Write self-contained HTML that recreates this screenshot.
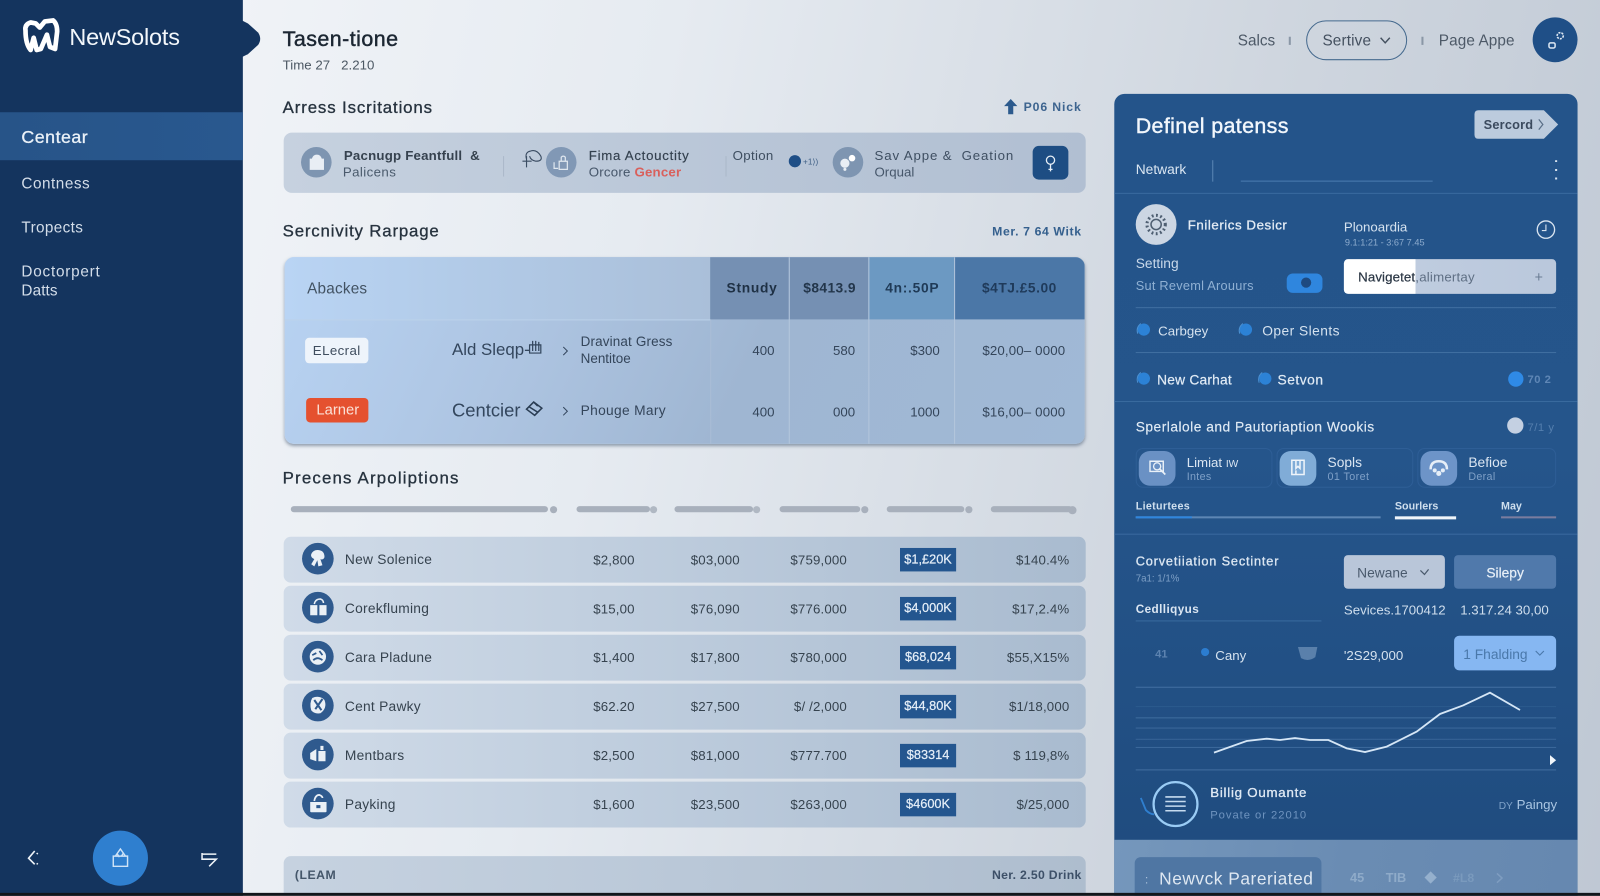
<!DOCTYPE html>
<html><head><meta charset="utf-8"><title>NewSolots</title>
<style>
html,body{margin:0;padding:0;width:1600px;height:896px;overflow:hidden;background:#111;font-family:"Liberation Sans",sans-serif}
#w{position:absolute;left:0;top:0;width:1568px;height:878px;transform:scale(1.020408);transform-origin:0 0;overflow:hidden;background:linear-gradient(102deg,#f5f7fa 0%,#e6ebf1 38%,#cfd6df 72%,#bfc8d4 100%)}
.b{position:absolute;box-sizing:border-box}
.t{position:absolute;white-space:nowrap;line-height:1.2;transform:translateY(calc(-50% + .8px))}
.r{transform:translate(-100%,calc(-50% + .8px))}
.c{transform:translate(-50%,calc(-50% + .8px))}
.m{-webkit-text-stroke:.3px currentColor}
.f{font-weight:700}
svg{position:absolute;overflow:visible}
.row{position:absolute;left:278px;width:786px;height:45px;border-radius:7px;background:linear-gradient(90deg,#d0dbe8,#bccbdc 50%,#a9bbcf)}
.circ{position:absolute;left:296px;width:31px;height:31px;border-radius:50%;background:#2f5a8e}
.n{font-size:13.5px;color:#36434f;left:338px;letter-spacing:.25px}
.v{font-size:13px;color:#36434f;letter-spacing:.15px}
.pill{position:absolute;left:882px;width:55px;height:23px;background:#24568f;color:#e6eff8;font-size:12.5px;line-height:23px;text-align:center;-webkit-text-stroke:.2px #e6eff8}
.ln{position:absolute;height:1px;background:#3a6a9f}
.gl{position:absolute;left:1113px;width:412px;height:1px;background:#4d7aab}
.tb{font-size:13.5px;color:#34455a}
</style></head><body>
<div id="w">
<!-- sidebar -->
<div class="b" style="left:0;top:0;width:238px;height:878px;background:#14345e"></div>
<svg style="left:237px;top:20px" width="21" height="37"><path d="M0 0 L6 3 L16 12 Q20 18 16 24 L6 33 L0 36Z" fill="#14345e"/></svg>
<div class="b" style="left:0;top:110px;width:238px;height:47px;background:linear-gradient(90deg,#275488,#29588f)"></div>
<svg style="left:21px;top:17px" width="38" height="36" viewBox="0 0 38 36"><path d="M4 13 Q3 7 9 5 L14 6 L18 10 L23 4 L31 3 Q35 6 35 14 L33 31 L28 29 L25 17 L19 31 L15 32 L12 20 L9 32 Q4 26 4 13Z" fill="none" stroke="#fff" stroke-width="4.6" stroke-linejoin="round"/></svg>
<div class="t" style="left:68px;top:36px;font-size:23px;color:#f3f7fb;letter-spacing:-.2px">NewSolots</div>
<div class="t m" style="left:21px;top:134px;font-size:17.5px;color:#eaf1f8;letter-spacing:.45px">Centear</div>
<div class="t" style="left:21px;top:180px;font-size:15px;color:#d3dde9;letter-spacing:.5px">Contness</div>
<div class="t" style="left:21px;top:223px;font-size:15px;color:#d3dde9;letter-spacing:.35px">Tropects</div>
<div class="t" style="left:21px;top:265.500px;font-size:15px;color:#d3dde9;letter-spacing:.75px">Doctorpert</div>
<div class="t" style="left:21px;top:284.500px;font-size:15px;color:#d3dde9;letter-spacing:.1px">Datts</div>
<svg style="left:26px;top:833px" width="14" height="16" viewBox="0 0 14 16"><path d="M8 1 L2 8 L8 14 M10 4 L11 3 M10 13 L11 14" stroke="#eef3f8" stroke-width="1.6" fill="none"/></svg>
<div class="b" style="left:91px;top:814px;width:54px;height:54px;border-radius:50%;background:#2f7fcf"></div>
<svg style="left:109px;top:831px" width="18" height="19" viewBox="0 0 18 19"><path d="M2 8 H16 V18 H2Z M4 8 L9 1 L14 8 M6 6 L8 9 M12 5 L10 8" stroke="#cfe3f7" stroke-width="1.4" fill="none"/></svg>
<svg style="left:197px;top:834px" width="16" height="16" viewBox="0 0 16 16"><path d="M1 2 V8 H15 L8 15 M1 3 H15" stroke="#eef3f8" stroke-width="1.5" fill="none"/></svg>

<!-- head -->
<div class="t m" style="left:277px;top:38px;font-size:21px;color:#1c2733;letter-spacing:.45px;-webkit-text-stroke:.45px #1c2733">Tasen-tione</div>
<div class="t" style="left:277px;top:63px;font-size:13px;color:#4b5763;white-space:pre">Time 27   2.210</div>
<div class="t" style="left:1213px;top:40px;font-size:15px;color:#4d5967">Salcs</div>
<div class="b" style="left:1263px;top:36px;width:1.5px;height:8px;background:#8a97a6"></div>
<div class="b" style="left:1280px;top:20px;width:99px;height:39px;border-radius:20px;border:1.5px solid #466a8e"></div>
<div class="t" style="left:1296px;top:40px;font-size:15px;color:#44505f;letter-spacing:.15px">Sertive</div>
<svg style="left:1352px;top:36px" width="11" height="8"><path d="M1 1 L5.500 6 L10 1" stroke="#44505f" stroke-width="1.400" fill="none"/></svg>
<div class="b" style="left:1393px;top:36px;width:1.5px;height:8px;background:#8a97a6"></div>
<div class="t" style="left:1410px;top:40px;font-size:15px;color:#4d5967;letter-spacing:.1px">Page Appe</div>
<div class="b" style="left:1502px;top:17px;width:44px;height:44px;border-radius:50%;background:#1f4f87"></div>
<svg style="left:1514px;top:29px" width="22" height="20"><circle cx="15" cy="6" r="3" fill="none" stroke="#dbe6f2" stroke-width="1.600" stroke-dasharray="2 1"/><rect x="4" y="13" width="6" height="5" rx="1.500" fill="none" stroke="#dbe6f2" stroke-width="1.500"/></svg>

<!-- section 1 -->
<div class="t m" style="left:277px;top:106px;font-size:16.500px;color:#27333f;letter-spacing:.85px">Arress Iscritations</div>
<svg style="left:984px;top:97px" width="13" height="16"><path d="M6.500 0 L13 7 H9 V15 H4 V7 H0Z" fill="#2c5a8d"/></svg>
<div class="t f r" style="left:1060px;top:104px;font-size:12px;color:#3d648f;letter-spacing:.85px">P06 Nick</div>
<div class="b" style="left:278px;top:130px;width:786px;height:59px;border-radius:8px;background:linear-gradient(90deg,#c6d1df,#bac7d8 50%,#b1bfd2)"></div>
<div class="b" style="left:295px;top:144px;width:30px;height:30px;border-radius:50%;background:#7e95b1"></div>
<svg style="left:303px;top:151px" width="15" height="16"><path d="M1 5 H14 V15 H1Z M3 5 Q4 1 7.500 1 Q11 1 12 5" fill="#e9eef4" stroke="#e9eef4"/></svg>
<div class="t f" style="left:337px;top:152px;font-size:13px;color:#36424f;letter-spacing:.2px;white-space:pre">Pacnugp Feantfull  &amp;</div>
<div class="t" style="left:336px;top:168px;font-size:13px;color:#4a5a6c;letter-spacing:.4px">Palicens</div>
<div class="b" style="left:493px;top:153px;width:1px;height:20px;background:#aab8c9"></div>
<svg style="left:511px;top:146px" width="21" height="19" viewBox="0 0 21 19"><path d="M1 12 H10 M5 7 V18 M5 10 Q3 3 9 2 Q15 0 19 7 Q21 12 14 12 Q9 11 8 7" fill="none" stroke="#3a4c62" stroke-width="1.100"/></svg>
<div class="b" style="left:535px;top:144px;width:30px;height:30px;border-radius:50%;background:#8198b5"></div>
<svg style="left:542px;top:151px" width="16" height="16"><path d="M1 8 V14 H5 M6 7 H14 V15 H6Z M8 7 V3 Q10 1 12 3 V7" fill="none" stroke="#dfe7ef" stroke-width="1.200"/></svg>
<div class="t m" style="left:577px;top:152px;font-size:13px;color:#34414f;letter-spacing:.7px;-webkit-text-stroke:.15px #34414f">Fima Actouctity</div>
<div class="t" style="left:577px;top:168px;font-size:13px;color:#46566a;letter-spacing:.2px">Orcore <span style="color:#d9605c" class="f">Gencer</span></div>
<div class="b" style="left:711px;top:153px;width:1px;height:20px;background:#aab8c9"></div>
<div class="t" style="left:718px;top:152px;font-size:13px;color:#3e4e60;letter-spacing:.3px">Option</div>
<div class="b" style="left:773px;top:152px;width:12px;height:12px;border-radius:50%;background:#1f4f87"></div>
<div class="t" style="left:787px;top:158px;font-size:8px;color:#3f5f85">+1&#x27E9;)</div>
<div class="b" style="left:816px;top:144px;width:30px;height:30px;border-radius:50%;background:#7e95b1"></div>
<svg style="left:821px;top:150px" width="20" height="19"><circle cx="7" cy="10" r="4.500" fill="#e9eef4"/><circle cx="14" cy="5" r="3.200" fill="#fff"/><circle cx="7" cy="16" r="1.500" fill="#e9eef4"/></svg>
<div class="t" style="left:857px;top:152px;font-size:13px;color:#3f4f62;white-space:pre;letter-spacing:.85px">Sav Appe &amp;  Geation</div>
<div class="t" style="left:857px;top:168px;font-size:13px;color:#46566a">Orqual</div>
<div class="b" style="left:1012px;top:143px;width:35px;height:33px;border-radius:6px;background:#1d4d83"></div>
<svg style="left:1024px;top:152px" width="11" height="17"><circle cx="5.500" cy="5" r="4" fill="none" stroke="#e6eef6" stroke-width="1.300"/><path d="M5.500 9 V16 M3.500 14 H7.500" stroke="#e6eef6" stroke-width="1.300"/></svg>

<!-- section 2 -->
<div class="t m" style="left:277px;top:227px;font-size:16.500px;color:#27333f;letter-spacing:.8px">Sercnivity Rarpage</div>
<div class="t f r" style="left:1060px;top:226px;font-size:12px;color:#35608e;letter-spacing:.6px">Mer. 7 64 Witk</div>
<div class="b" style="left:279px;top:252px;width:784px;height:183px;border-radius:9px;overflow:hidden;box-shadow:0 2px 3px rgba(70,90,115,.55);background:linear-gradient(115deg,#b8d3f3 0%,#adc4e1 32%,#9fb6d2 58%,#a0b9d6 100%)">
 <div class="b" style="left:0;top:0;width:417px;height:61px;background:linear-gradient(90deg,#b9d4f4,#b2cbe8 40%,#aabfd9)"></div>
 <div class="b" style="left:417px;top:0;width:77px;height:61px;background:#7590b3"></div>
 <div class="b" style="left:494px;top:0;width:78px;height:61px;background:#7590b3"></div>
 <div class="b" style="left:572px;top:0;width:84px;height:61px;background:#6c99c2"></div>
 <div class="b" style="left:656px;top:0;width:128px;height:61px;background:#4b77a7"></div>
 <div class="b" style="left:494px;top:0;width:1px;height:183px;background:#b3c6dc"></div>
 <div class="b" style="left:572px;top:0;width:1px;height:183px;background:#b3c6dc"></div>
 <div class="b" style="left:656px;top:0;width:1px;height:183px;background:#b3c6dc"></div>
 <div class="b" style="left:417px;top:61px;width:1px;height:122px;background:#a9bdd6"></div>
 <div class="b" style="left:0;top:61px;width:417px;height:1px;background:#bcd2ea"></div>
</div>
<div class="t" style="left:301px;top:283px;font-size:15px;color:#425262;letter-spacing:.2px">Abackes</div>
<div class="t f c" style="left:737px;top:282px;font-size:13.500px;color:#1e3044;letter-spacing:.7px">Stnudy</div>
<div class="t f c" style="left:813px;top:282px;font-size:13.500px;color:#23364b;letter-spacing:.4px">$8413.9</div>
<div class="t f c" style="left:894px;top:282px;font-size:13.500px;color:#1f3a56;letter-spacing:.7px">4n:.50P</div>
<div class="t f c" style="left:999px;top:282px;font-size:13.500px;color:#1f3a5a;letter-spacing:.5px">$4TJ.£5.00</div>
<div class="b" style="left:299px;top:331px;width:62px;height:25px;border-radius:4px;background:#eef4fb"></div>
<div class="t c" style="left:330px;top:343px;font-size:13px;color:#3f4d5e;letter-spacing:.4px">ELecral</div>
<div class="b" style="left:300px;top:390px;width:61px;height:24px;border-radius:4px;background:#e5512f"></div>
<div class="t c" style="left:331px;top:402px;font-size:14.500px;color:#fbe0d5">Larner</div>
<div class="t" style="left:443px;top:342.500px;font-size:16.500px;color:#33465d">Ald Sleqp-</div>
<svg style="left:516px;top:332px" width="17" height="17" viewBox="0 0 17 17"><path d="M3 6 H14 V14 H3Z M6 2 V12 M9 2 V12 M12 3 V12" fill="none" stroke="#33465d" stroke-width="1.200"/></svg>
<div class="t" style="left:443px;top:402px;font-size:18px;color:#33465d">Centcier</div>
<svg style="left:514px;top:392px" width="19" height="18" viewBox="0 0 19 18"><path d="M9 2 L17 8 L10 15 L2 9Z M5 7 L13 12 M9 2 L13 6" fill="none" stroke="#2a3d53" stroke-width="1.500"/></svg>
<svg style="left:551px;top:339px" width="7" height="10"><path d="M1 1 L5 5 L1 9" stroke="#33465d" fill="none"/></svg>
<svg style="left:551px;top:398px" width="7" height="10"><path d="M1 1 L5 5 L1 9" stroke="#33465d" fill="none"/></svg>
<div class="t tb" style="left:569px;top:334px;font-size:13.200px;letter-spacing:.15px">Dravinat Gress</div>
<div class="t tb" style="left:569px;top:351px;font-size:13.200px">Nentitoe</div>
<div class="t tb" style="left:569px;top:402px;letter-spacing:.3px">Phouge Mary</div>
<div class="t tb r" style="left:759px;top:343px;font-size:13px">400</div>
<div class="t tb r" style="left:838px;top:343px;font-size:13px">580</div>
<div class="t tb r" style="left:921px;top:343px;font-size:13px">$300</div>
<div class="t tb r" style="left:1044px;top:343px;font-size:13px;letter-spacing:.15px">$20,00– 0000</div>
<div class="t tb r" style="left:759px;top:403px;font-size:13px">400</div>
<div class="t tb r" style="left:838px;top:403px;font-size:13px">000</div>
<div class="t tb r" style="left:921px;top:403px;font-size:13px">1000</div>
<div class="t tb r" style="left:1044px;top:403px;font-size:13px;letter-spacing:.15px">$16,00– 0000</div>

<!-- section 3 -->
<div class="t m" style="left:277px;top:469px;font-size:16.500px;color:#27333f;letter-spacing:1.15px">Precens Arpoliptions</div>
<div class="b" style="left:285px;top:496px;width:252px;height:6px;border-radius:3px;background:#a8b0bc"></div><div class="b" style="left:539px;top:496px;width:7px;height:7px;border-radius:50%;background:#a8b0bc"></div>
<div class="b" style="left:565px;top:496px;width:72px;height:6px;border-radius:3px;background:#a8b0bc"></div><div class="b" style="left:637px;top:496px;width:7px;height:7px;border-radius:50%;background:#b0b8c3"></div>
<div class="b" style="left:661px;top:496px;width:77px;height:6px;border-radius:3px;background:#a8b0bc"></div><div class="b" style="left:738px;top:496px;width:7px;height:7px;border-radius:50%;background:#b0b8c3"></div>
<div class="b" style="left:764px;top:496px;width:79px;height:6px;border-radius:3px;background:#a8b0bc"></div><div class="b" style="left:844px;top:496px;width:7px;height:7px;border-radius:50%;background:#a8b0bc"></div>
<div class="b" style="left:869px;top:496px;width:76px;height:6px;border-radius:3px;background:#a8b0bc"></div><div class="b" style="left:946px;top:496px;width:7px;height:7px;border-radius:50%;background:#a8b0bc"></div>
<div class="b" style="left:971px;top:496px;width:80px;height:6px;border-radius:3px;background:#a8b0bc"></div><div class="b" style="left:1047px;top:496px;width:8px;height:8px;border-radius:50%;background:#a8b0bc"></div>

<div class="row" style="top:526px"></div>
<div class="row" style="top:574px"></div>
<div class="row" style="top:622px"></div>
<div class="row" style="top:670px"></div>
<div class="row" style="top:718px"></div>
<div class="row" style="top:766px"></div>
<div class="circ" style="top:532px"></div><div class="circ" style="top:580px"></div><div class="circ" style="top:628px"></div><div class="circ" style="top:676px"></div><div class="circ" style="top:724px"></div><div class="circ" style="top:772px"></div>
<svg style="left:302px;top:538px" width="19" height="19" viewBox="0 0 19 19"><path d="M9 1 Q16 1 16 8 Q15 11 12 10 L14 16 L10 17 L9 11 L6 17 L3 15 L6 10 Q2 8 3 5 Q5 1 9 1Z" fill="#eaf0f6"/></svg>
<svg style="left:303px;top:586px" width="18" height="19" viewBox="0 0 18 19"><path d="M1 7 H8 V17 H1Z M10 7 H17 V17 H10Z" fill="#eaf0f6"/><path d="M5 6 Q6 1 11 1 Q14 2 14 5" fill="none" stroke="#eaf0f6" stroke-width="1.500"/></svg>
<svg style="left:302px;top:634px" width="19" height="19" viewBox="0 0 19 19"><circle cx="9.500" cy="9.500" r="8" fill="#eaf0f6"/><path d="M4 8 L8 6 M5 13 Q9 9 14 13 M11 4 L14 8" stroke="#2f5a8e" stroke-width="1.700" fill="none"/></svg>
<svg style="left:302px;top:682px" width="19" height="19" viewBox="0 0 19 19"><path d="M4 2 Q11 -1 16 4 Q19 12 12 17 Q6 18 3 14 Q1 7 4 2Z" fill="#eaf0f6"/><path d="M6 4 L13 14 M14 3 L7 13" stroke="#2f5a8e" stroke-width="2" fill="none"/></svg>
<svg style="left:303px;top:730px" width="18" height="19" viewBox="0 0 18 19"><path d="M1 8 L7 4 V16 L1 14Z M9 6 H16 V16 H9Z M11 5 V1 H14 V5" fill="#eaf0f6"/></svg>
<svg style="left:303px;top:778px" width="18" height="19" viewBox="0 0 18 19"><path d="M1 8 H17 V17 Q17 18 16 18 H2 Q1 18 1 17Z" fill="#eaf0f6"/><path d="M5 7 Q6 1 10 1 Q13 2 13 4" fill="none" stroke="#eaf0f6" stroke-width="1.700"/><rect x="7" y="11" width="4" height="3" fill="#2f5a8e"/></svg>

<div class="t n" style="top:547.500px">New Solenice</div>
<div class="t n" style="top:595.500px">Corekfluming</div>
<div class="t n" style="top:643.500px">Cara Pladune</div>
<div class="t n" style="top:691.500px">Cent Pawky</div>
<div class="t n" style="top:739.500px">Mentbars</div>
<div class="t n" style="top:787.500px">Payking</div>

<div class="t v r" style="left:622px;top:547.500px">$2,800</div><div class="t v r" style="left:725px;top:547.500px">$03,000</div><div class="t v r" style="left:830px;top:547.500px">$759,000</div><div class="pill" style="top:537px">$1,£20K</div><div class="t v r" style="left:1048px;top:547.500px">$140.4%</div>
<div class="t v r" style="left:622px;top:595.500px">$15,00</div><div class="t v r" style="left:725px;top:595.500px">$76,090</div><div class="t v r" style="left:830px;top:595.500px">$776.000</div><div class="pill" style="top:585px">$4,000K</div><div class="t v r" style="left:1048px;top:595.500px">$17,2.4%</div>
<div class="t v r" style="left:622px;top:643.500px">$1,400</div><div class="t v r" style="left:725px;top:643.500px">$17,800</div><div class="t v r" style="left:830px;top:643.500px">$780,000</div><div class="pill" style="top:633px">$68,024</div><div class="t v r" style="left:1048px;top:643.500px">$55,X15%</div>
<div class="t v r" style="left:622px;top:691.500px">$62.20</div><div class="t v r" style="left:725px;top:691.500px">$27,500</div><div class="t v r" style="left:830px;top:691.500px">$/ /2,000</div><div class="pill" style="top:681px">$44,80K</div><div class="t v r" style="left:1048px;top:691.500px">$1/18,000</div>
<div class="t v r" style="left:622px;top:739.500px">$2,500</div><div class="t v r" style="left:725px;top:739.500px">$81,000</div><div class="t v r" style="left:830px;top:739.500px">$777.700</div><div class="pill" style="top:729px">$83314</div><div class="t v r" style="left:1048px;top:739.500px">$ 119,8%</div>
<div class="t v r" style="left:622px;top:787.500px">$1,600</div><div class="t v r" style="left:725px;top:787.500px">$23,500</div><div class="t v r" style="left:830px;top:787.500px">$263,000</div><div class="pill" style="top:777px">$4600K</div><div class="t v r" style="left:1048px;top:787.500px">$/25,000</div>

<div class="b" style="left:278px;top:839px;width:786px;height:40px;border-radius:7px 7px 0 0;background:linear-gradient(90deg,#c6d2e0,#bac8d8 50%,#aebdce)"></div>
<div class="t f" style="left:289px;top:857px;font-size:12px;color:#44566a;letter-spacing:.5px">(LEAM</div>
<div class="t f r" style="left:1060px;top:857px;font-size:12px;color:#3d5068;letter-spacing:.3px">Ner. 2.50 Drink</div>

<!-- right panel -->
<div class="b" style="left:1092px;top:92px;width:454px;height:790px;border-radius:10px 10px 0 0;background:linear-gradient(180deg,#24548a 0%,#25558b 45%,#1f4b7e 100%)"></div>
<div class="b" style="left:1092px;top:823px;width:454px;height:60px;background:linear-gradient(100deg,#7597bc,#6a8cb3 50%,#6688b0)"></div>
<div class="b" style="left:1112px;top:840px;width:183px;height:40px;border-radius:6px 6px 0 0;background:#4f76a3"></div>
<div class="t" style="left:1136px;top:861px;font-size:17px;color:#dfe8f2;letter-spacing:.5px">Newvck Pareriated</div>
<div class="t" style="left:1122px;top:861px;font-size:12px;color:#a9c0d9">:</div>
<div class="t f" style="left:1323px;top:860px;font-size:12.500px;color:#8fabc9">45</div>
<div class="t f" style="left:1358px;top:860px;font-size:12.500px;color:#8fabc9">TIB</div>
<svg style="left:1396px;top:854px" width="12" height="12"><path d="M6 0 L12 6 L6 12 L0 6Z" fill="#95b0cd"/></svg>
<div class="t f" style="left:1424px;top:860px;font-size:12px;color:#7a9abd">#L8</div>
<svg style="left:1466px;top:855px" width="8" height="11"><path d="M1 1 L6 5.500 L1 10" stroke="#7f9dc0" stroke-width="1.500" fill="none"/></svg>

<div class="t m" style="left:1113px;top:123px;font-size:21px;color:#f2f7fc;letter-spacing:.35px;-webkit-text-stroke:.4px #f2f7fc">Definel patenss</div>
<svg style="left:1445px;top:108px" width="83" height="28"><path d="M4 0 H68 L82 14 L68 28 H4 Q0 28 0 24 V4 Q0 0 4 0Z" fill="#bccbdd"/><path d="M63 9 L67 14 L63 19" stroke="#5a6f88" stroke-width="1.200" fill="none"/></svg>
<div class="t f" style="left:1454px;top:122px;font-size:12.500px;color:#3b4a5e;letter-spacing:.2px">Sercord</div>
<div class="t" style="left:1113px;top:166px;font-size:13.500px;color:#dae6f2">Netwark</div>
<div class="b" style="left:1188px;top:157px;width:1px;height:21px;background:#5b86b5"></div>
<div class="b" style="left:1216px;top:177px;width:188px;height:1px;background:#4b7cb0"></div>
<div class="b" style="left:1524px;top:157px;width:2px;height:21px;background:repeating-linear-gradient(180deg,#d8e3ef 0 2px,transparent 2px 8.500px)"></div>
<div class="ln" style="left:1092px;top:189px;width:454px"></div>
<div class="b" style="left:1113px;top:200px;width:40px;height:40px;border-radius:50%;background:#ccd6e3"></div>
<svg style="left:1122px;top:209px" width="22" height="22" viewBox="0 0 22 22"><circle cx="11" cy="11" r="5" fill="none" stroke="#4f5f72" stroke-width="1.500"/><circle cx="11" cy="11" r="9" fill="none" stroke="#4f5f72" stroke-width="3" stroke-dasharray="1.800 2.400"/></svg>
<div class="t m" style="left:1164px;top:220px;font-size:13px;color:#e4ecf5;letter-spacing:.55px">Fnilerics Desicr</div>
<div class="t" style="left:1317px;top:222px;font-size:13px;color:#d5e2ef">Plonoardia</div>
<div class="t" style="left:1318px;top:237px;font-size:9px;color:#8eacce">9.1:1:21 - 3:67 7.45</div>
<svg style="left:1505px;top:215px" width="20" height="20"><circle cx="10" cy="10" r="8.500" fill="none" stroke="#d9e4f0" stroke-width="1.300"/><path d="M10 5 V11 H6" stroke="#d9e4f0" stroke-width="1.100" fill="none"/></svg>
<div class="t" style="left:1113px;top:258px;font-size:13.500px;color:#c9d9ea">Setting</div>
<div class="t" style="left:1113px;top:280px;font-size:12.500px;color:#8fb0d3;letter-spacing:.25px">Sut Reveml Arouurs</div>
<div class="b" style="left:1261px;top:268px;width:35px;height:19px;border-radius:6px;background:#2f86de"></div>
<div class="b" style="left:1275px;top:272px;width:10px;height:10px;border-radius:50%;background:#1e4a80"></div>
<div class="b" style="left:1317px;top:254px;width:208px;height:34px;border-radius:4px;background:linear-gradient(90deg,#fff 0,#fff 70px,#bfccdf 70px,#bac8dc 100%)"></div>
<div class="t m" style="left:1331px;top:271px;font-size:13px;color:#2a3644;-webkit-text-stroke:.2px #2a3644;letter-spacing:.1px">Navigetet</div>
<div class="t" style="left:1387px;top:271px;font-size:13px;color:#5f6f84;letter-spacing:.2px">,alimertay</div>
<div class="t c" style="left:1508px;top:271px;font-size:14px;color:#6a7c93">+</div>
<div class="gl" style="top:301px;opacity:.7"></div>

<svg style="left:1113px;top:316px" width="16" height="15"><circle cx="8" cy="7" r="6" fill="#2c82d6"/><path d="M2 11 Q0 5 5 1" stroke="#4a90d2" fill="none"/></svg>
<div class="t" style="left:1135px;top:324px;font-size:13px;color:#d5e2ef">Carbgey</div>
<svg style="left:1213px;top:316px" width="16" height="15"><circle cx="8" cy="7" r="6" fill="#2c82d6"/><path d="M2 11 Q0 5 5 1" stroke="#4a90d2" fill="none"/></svg>
<div class="t" style="left:1237px;top:324px;font-size:13.500px;color:#d5e2ef;letter-spacing:.45px">Oper Slents</div>
<div class="gl" style="top:345px;opacity:.7"></div>
<svg style="left:1113px;top:364px" width="16" height="15"><circle cx="8" cy="7" r="6" fill="#2c82d6"/><path d="M2 11 Q0 5 5 1" stroke="#4a90d2" fill="none"/></svg>
<div class="t m" style="left:1134px;top:372px;font-size:13.500px;color:#e1ebf5;letter-spacing:.2px;-webkit-text-stroke:.2px #e1ebf5">New Carhat</div>
<svg style="left:1232px;top:364px" width="16" height="15"><circle cx="8" cy="7" r="6" fill="#2c82d6"/><path d="M2 11 Q0 5 5 1" stroke="#4a90d2" fill="none"/></svg>
<div class="t m" style="left:1252px;top:372px;font-size:13.500px;color:#e1ebf5;letter-spacing:.5px;-webkit-text-stroke:.2px #e1ebf5">Setvon</div>
<div class="b" style="left:1478px;top:364px;width:15px;height:15px;border-radius:50%;background:#2f8ae6"></div>
<div class="t f" style="left:1497px;top:372px;font-size:11px;color:#5f87b6;letter-spacing:.5px">70 2</div>
<div class="ln" style="left:1092px;top:393px;width:454px"></div>
<div class="t m" style="left:1113px;top:418px;font-size:13.500px;color:#e1ebf5;letter-spacing:.48px;-webkit-text-stroke:.15px #e1ebf5">Sperlalole and Pautoriaption Wookis</div>
<div class="b" style="left:1477px;top:409px;width:16px;height:16px;border-radius:50%;background:#c4d0e2"></div>
<div class="t" style="left:1497px;top:419px;font-size:11px;color:#557fae;letter-spacing:.5px">7/1 y</div>

<div class="b" style="left:1113px;top:439px;width:134px;height:39px;border-radius:7px;border:1px solid #2e5e96"></div>
<div class="b" style="left:1251px;top:439px;width:134px;height:39px;border-radius:7px;border:1px solid #2e5e96"></div>
<div class="b" style="left:1389px;top:439px;width:136px;height:39px;border-radius:7px;border:1px solid #2e5e96"></div>
<div class="b" style="left:1116px;top:442px;width:36px;height:34px;border-radius:11px;background:#6a91c4"></div>
<div class="b" style="left:1254px;top:442px;width:36px;height:34px;border-radius:11px;background:#80acd7"></div>
<div class="b" style="left:1392px;top:442px;width:36px;height:34px;border-radius:11px;background:#6d94c8"></div>
<svg style="left:1125px;top:450px" width="19" height="18"><path d="M2 2 H15 V12 H2Z" fill="none" stroke="#eaf1f8" stroke-width="1.400"/><circle cx="9" cy="7" r="3.500" fill="none" stroke="#eaf1f8" stroke-width="1.300"/><path d="M11 9 L17 15" stroke="#eaf1f8" stroke-width="1.600"/></svg>
<svg style="left:1264px;top:449px" width="16" height="20"><path d="M2 2 H14 V16 H2Z M6 2 V10 L8 8 L10 10 V2 M6 16 V12" fill="none" stroke="#eef4fa" stroke-width="1.500"/></svg>
<svg style="left:1400px;top:449px" width="20" height="20"><path d="M2 11 Q2 3 10 3 Q18 3 18 11" fill="none" stroke="#e6eef7" stroke-width="2.500"/><circle cx="6" cy="12" r="2" fill="#e6eef7"/><circle cx="14" cy="12" r="2" fill="#e6eef7"/><circle cx="10" cy="15" r="2.500" fill="#e6eef7"/></svg>
<div class="t" style="left:1163px;top:453px;font-size:13px;color:#dbe6f2">Limiat <span style="font-size:10px">IW</span></div>
<div class="t" style="left:1163px;top:467px;font-size:10.500px;color:#7fa0c7;letter-spacing:.3px">Intes</div>
<div class="t" style="left:1301px;top:453px;font-size:13.500px;color:#dbe6f2">Sopls</div>
<div class="t" style="left:1301px;top:467px;font-size:10.500px;color:#7fa0c7;letter-spacing:.4px">01 Toret</div>
<div class="t" style="left:1439px;top:453px;font-size:13.500px;color:#dbe6f2">Befioe</div>
<div class="t" style="left:1439px;top:467px;font-size:10.500px;color:#7fa0c7;letter-spacing:.3px">Deral</div>

<div class="t f" style="left:1113px;top:496px;font-size:10.500px;color:#cfdfee;letter-spacing:.3px">Lieturtees</div>
<div class="t f" style="left:1367px;top:496px;font-size:10.500px;color:#cfdfee">Sourlers</div>
<div class="t f" style="left:1471px;top:496px;font-size:10.500px;color:#cfdfee">May</div>
<div class="b" style="left:1113px;top:506px;width:240px;height:2px;background:#5d86b4"></div>
<div class="b" style="left:1113px;top:506px;width:55px;height:2px;background:#2f86de"></div>
<div class="b" style="left:1367px;top:506px;width:60px;height:2.500px;background:#eef4fa"></div>
<div class="b" style="left:1471px;top:506px;width:54px;height:2px;background:#7a7d9f"></div>
<div class="ln" style="left:1092px;top:523px;width:454px"></div>
<div class="t" style="left:1113px;top:550px;font-size:12.500px;color:#dbe6f2;letter-spacing:.8px;-webkit-text-stroke:.3px #dbe6f2">Corvetiiation Sectinter</div>
<div class="t" style="left:1113px;top:567px;font-size:9.500px;color:#7fa0c7">7a1: 1/1%</div>
<div class="b" style="left:1317px;top:544px;width:99px;height:33px;border-radius:4px;background:#b9c6d9"></div>
<div class="t" style="left:1330px;top:561px;font-size:13.500px;color:#4a5a6d">Newane</div>
<svg style="left:1391px;top:557px" width="10" height="8"><path d="M1 2 L5 6 L9 1" stroke="#4a5a6d" stroke-width="1.200" fill="none"/></svg>
<div class="b" style="left:1425px;top:544px;width:100px;height:33px;border-radius:4px;background:#5079ab"></div>
<div class="t c m" style="left:1475px;top:561px;font-size:13.500px;color:#e7eff7;-webkit-text-stroke:.2px #e7eff7">Silepy</div>
<div class="t f" style="left:1113px;top:598px;font-size:11.500px;color:#dbe6f2;letter-spacing:.4px">Cedlliqyus</div>
<div class="b" style="left:1113px;top:608px;width:182px;height:1px;background:#3a6a9f"></div>
<div class="t" style="left:1317px;top:597px;font-size:13px;color:#cfdeed">Sevices.1700412</div>
<div class="t" style="left:1431px;top:597px;font-size:13px;color:#cfdeed">1.317.24 30,00</div>
<div class="t f" style="left:1132px;top:641px;font-size:11px;color:#5d83b0">41</div>
<div class="b" style="left:1177px;top:635px;width:8px;height:8px;border-radius:50%;background:#2c7dd0"></div>
<div class="t" style="left:1191px;top:642px;font-size:13px;color:#d5e2ef">Cany</div>
<svg style="left:1272px;top:634px" width="19" height="14"><path d="M0 0 H19 L17 10 Q10 15 3 11Z" fill="#5a80ab"/></svg>
<div class="t" style="left:1317px;top:642px;font-size:13px;color:#d5e2ef">'2S29,000</div>
<div class="b" style="left:1425px;top:623px;width:100px;height:34px;border-radius:5px;background:#86b7f2"></div>
<div class="t" style="left:1434px;top:641px;font-size:13.500px;color:#4a78aa">1 Fhalding</div>
<svg style="left:1504px;top:637px" width="10" height="7"><path d="M1 1 L5 5 L9 1" stroke="#4a78aa" stroke-width="1.100" fill="none"/></svg>

<div class="gl" style="top:673px;opacity:.75"></div>
<div class="gl" style="top:692px;opacity:.25"></div>
<div class="gl" style="top:703px;opacity:.7"></div>
<div class="gl" style="top:713px;opacity:.6"></div>
<div class="gl" style="top:724px;opacity:.5"></div>
<div class="gl" style="top:732px;opacity:.6"></div>
<div class="gl" style="top:754px;opacity:.75"></div>
<svg style="left:0;top:0" width="1568" height="878"><polyline points="1189.700,737.600 1221.700,726.200 1241.300,723.900 1254.400,725.200 1269.100,723.300 1283.800,725.200 1301.800,725.200 1319.800,733.400 1337.700,737 1359,731.700 1388.400,717 1411.200,699.700 1434.100,691.200 1460.200,678.800 1489.600,695.800" fill="none" stroke="#d5e6f6" stroke-width="1.800"/></svg>
<svg style="left:1518px;top:740px" width="8" height="11"><path d="M1 0 L7 5 L1 10Z" fill="#f1f6fb"/></svg>

<svg style="left:1115px;top:762px" width="62" height="52"><circle cx="37" cy="26" r="21.500" fill="none" stroke="#9accf5" stroke-width="2.200"/><path d="M3 20 L8 32 Q12 36 16 36" fill="none" stroke="#2f7fcf" stroke-width="1.800"/><path d="M27 19 H47 M27 23.500 H47 M27 28 H47 M27 32.500 H47" stroke="#c6dbef" stroke-width="1.500"/></svg>
<div class="t m" style="left:1186px;top:776px;font-size:13px;color:#dfe9f4;letter-spacing:.75px">Billig Oumante</div>
<div class="t" style="left:1186px;top:799px;font-size:11px;color:#6f94bf;letter-spacing:.95px">Povate or 22010</div>
<div class="t r" style="left:1526px;top:788px;font-size:13px;color:#a9c5e2"><span style="color:#7fa2c9;font-size:10px">DY</span> Paingy</div>

<div class="b" style="left:0;top:875px;width:1568px;height:3px;background:#12161b"></div>
</div>
</body></html>
